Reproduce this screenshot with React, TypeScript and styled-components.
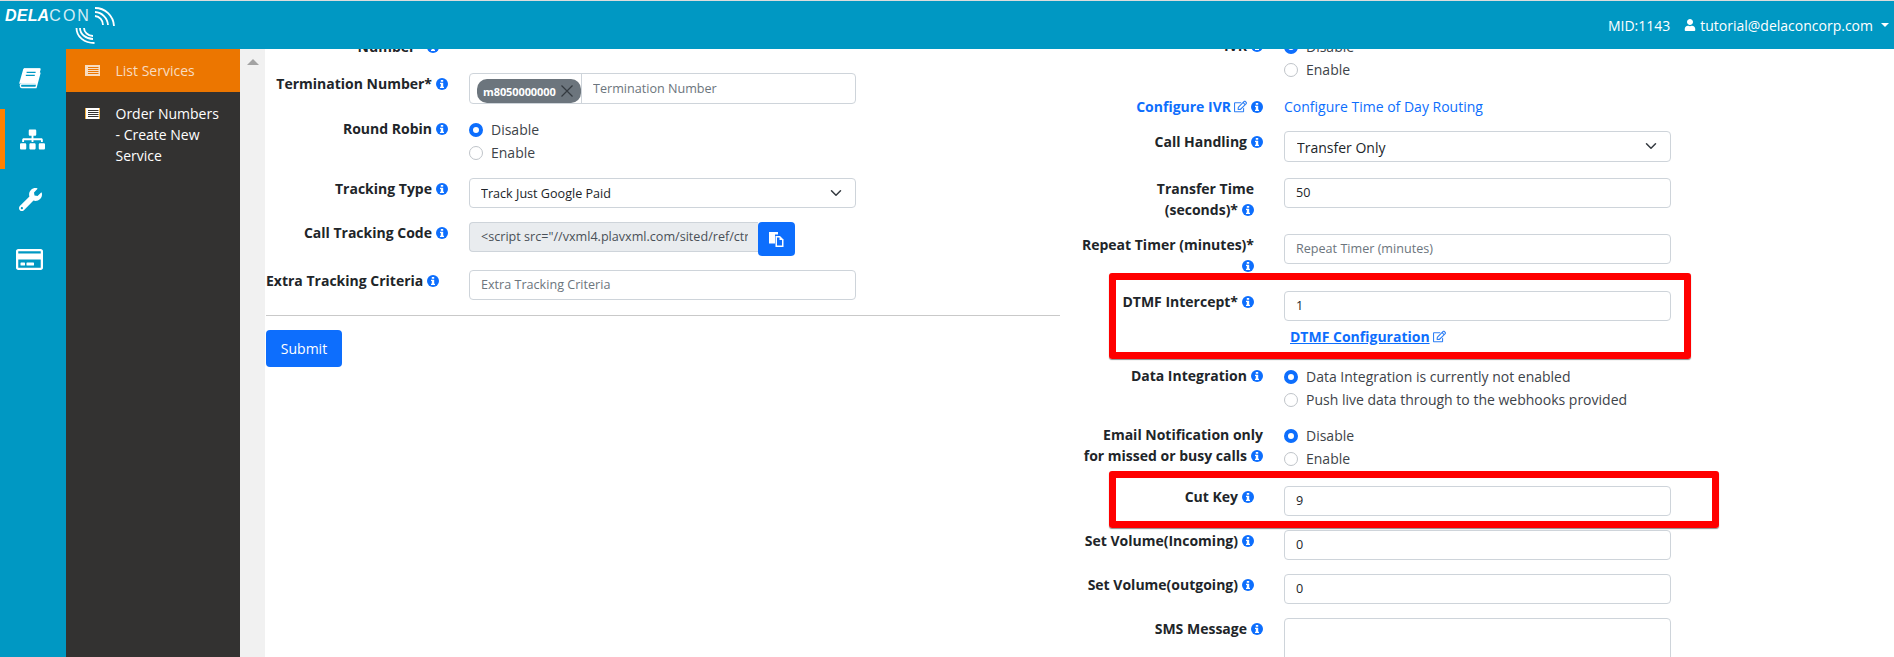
import React from "react";
import styled, { createGlobalStyle } from "styled-components";
import { FaRegCreditCard, FaRegEdit, FaSitemap, FaUser, FaWrench } from "react-icons/fa";

const Global = createGlobalStyle`
  html, body { margin: 0; height: 100%; overflow: hidden; background: #fff; }
  body { font-family: "Open Sans", "Liberation Sans", sans-serif; font-size: 14px; line-height: 21px; color: #212529; }
  * { box-sizing: border-box; }
`;

const Page = styled.div`
  display: flex; flex-direction: column; height: 657px; overflow: hidden;
`;
const Header = styled.header`
  position: relative; flex: none; height: 49px; display: flex; align-items: center; justify-content: flex-end;
  background: #0098c3; border-top: 1px solid #dcdcdc; color: #fff; padding-right: 5px;
`;
const Logo = styled.div`
  position: absolute; left: 5px; top: 7px; font-family: "Liberation Sans", Arial, sans-serif; font-size: 16px; line-height: 16px; color: #fff;
`;
const LogoStrong = styled.b`
  font-style: italic; letter-spacing: 0.2px;
`;
const LogoLight = styled.span`
  color: #d3eef6; letter-spacing: 2px;
`;
const Waves = styled.svg`
  position: absolute; left: 0; top: 0; pointer-events: none;
`;
const Mid = styled.span`
  margin-right: 14px;
`;
const UserText = styled.span`
  display: inline-flex; align-items: center; gap: 4px;
`;
const Caret = styled.span`
  width: 0; height: 0; margin-left: 8px; border-left: 4px solid transparent; border-right: 4px solid transparent; border-top: 4px solid #fff;
`;
const Body = styled.div`
  flex: 1; min-height: 0; display: flex;
`;
const Rail = styled.nav`
  flex: none; width: 66px; background: #0098c3; display: flex; flex-direction: column;
`;
const RailItem = styled.div<{ $active?: boolean; $shift?: number }>`
  height: 60px; display: flex; align-items: center; justify-content: center; color: #fff;
  border-left: 5px solid ${(p) => (p.$active ? "#ff8000" : "transparent")};
  padding-right: ${(p) => p.$shift ?? 8}px;
`;
const Menu = styled.aside`
  flex: none; width: 174px; background: #333231;
`;
const MenuItem = styled.div<{ $active?: boolean }>`
  display: flex; gap: 15.5px; padding: ${(p) => (p.$active ? "11px 16px 11px 19px" : "11px 16px 0 19px")};
  background: ${(p) => (p.$active ? "#ec7600" : "transparent")}; color: ${(p) => (p.$active ? "#f8dcc0" : "#fff")};
  font-size: 14px;
`;
const MenuIcon = styled.svg`
  flex: none; margin-top: 5px;
`;
const ScrollTrack = styled.div`
  flex: none; width: 25px; background: #f1f1f1; display: flex; justify-content: center; padding-top: 10px;
`;
const ScrollArrow = styled.span`
  width: 0; height: 0; border-left: 6px solid transparent; border-right: 6px solid transparent; border-bottom: 6px solid #a3a3a3;
`;
const Main = styled.main`
  flex: 1; min-width: 0; overflow: hidden; padding-left: 1px;
`;
const Columns = styled.div`
  display: grid; grid-template-columns: 794px 590px; column-gap: 21px; margin-top: -13px;
`;
const Column = styled.section``;
const RightColumn = styled.section`
  margin-top: -1px;
`;
const Row = styled.div<{ $mb?: number }>`
  position: relative; display: flex; gap: 21px; margin-bottom: ${(p) => p.$mb ?? 14}px;
`;
const Label = styled.label<{ $inset?: boolean; $link?: boolean }>`
  flex: none; width: 182px; text-align: right; font-weight: 700; line-height: 21px;
  padding-right: ${(p) => (p.$inset ? "9px" : "0")}; white-space: ${(p) => (p.$link ? "nowrap" : "normal")};
  color: ${(p) => (p.$link ? "#0d6efd" : "#212529")};
`;
const NoWrap = styled.span`
  white-space: nowrap;
`;
const InfoSvg = styled.svg`
  vertical-align: -1px; margin-left: 4px;
`;
const EditIcon = styled(FaRegEdit)`
  font-size: 13px; vertical-align: -1px; margin-left: 3px; color: #2f80f5;
`;
const Control = styled.div`
  flex: none; width: 387px;
`;
const TextInput = styled.input`
  display: block; width: 100%; height: 30px; padding: 0 11px 2px; border: 1px solid #ced4da; border-radius: 4px;
  font: 12.6px "Open Sans", sans-serif; color: #212529; background: #fff; outline: none;
  &::placeholder { color: #6c757d; }
`;
const Select = styled.select<{ $large?: boolean }>`
  display: block; width: 100%; height: ${(p) => (p.$large ? "31px" : "30px")}; padding: ${(p) => (p.$large ? "1px 12px 0" : "0 11px")}; border: 1px solid #ced4da; border-radius: 4px; appearance: none;
  font: ${(p) => (p.$large ? "14px" : "12.6px")} "Open Sans", sans-serif; color: #212529; background: #fff; outline: none;
`;
const SelectWrap = styled.div`
  position: relative;
`;
const Chevron = styled.svg`
  position: absolute; right: 14px; top: 9px; pointer-events: none;
`;
const TagBox = styled.div`
  display: flex; height: 31px; border: 1px solid #ced4da; border-radius: 4px; padding-left: 7px;
`;
const Chip = styled.span`
  flex: none; width: 104px; height: 24px; margin-top: 5px; display: flex; align-items: center; gap: 4px; padding-left: 6px;
  background: #6c757d; border-radius: 10px; color: #fff; font-size: 11px; font-weight: 700; letter-spacing: -0.1px;
`;
const ChipClose = styled.svg`
  flex: none; margin-left: 1px;
`;
const TagInput = styled.input`
  flex: 1; min-width: 0; border: 0; border-left: 1px solid #ced4da; padding: 0 0 1px 11px; outline: none; background: transparent;
  font: 12.6px "Open Sans", sans-serif;
  &::placeholder { color: #6c757d; }
`;
const RadioGroup = styled.div`
  display: flex; flex-direction: column;
`;
const RadioLine = styled.label`
  display: flex; align-items: center; gap: 8px; height: 23px; color: #3d4349;
`;
const Radio = styled.input`
  appearance: none; flex: none; width: 14px; height: 14px; margin: 0; border-radius: 50%; border: 1px solid #bfc4c9; background: #fff;
  &:checked { border: 4px solid #0d6efd; }
`;
const CopyGroup = styled.div`
  display: flex; align-items: flex-start; height: 34px;
`;
const CodeInput = styled(TextInput)`
  flex: none; width: 289px; background: #e9ecef; border-right: 0; border-radius: 4px 0 0 4px; padding-right: 10px; color: #495057;
`;
const CopyButton = styled.button`
  flex: none; width: 37px; height: 34px; border: 0; border-radius: 4px; background: #0d6efd; padding: 0; display: flex; align-items: center; justify-content: center;
`;
const Divider = styled.hr`
  margin: 0 0 14px; border: 0; border-top: 1px solid #c9c9c9;
`;
const Submit = styled.button`
  display: block; width: 76px; height: 37px; border: 0; border-radius: 4px; background: #0d6efd; color: #fff; font: 14px "Open Sans", sans-serif;
`;
const PlainLink = styled.a`
  color: #0d6efd; display: block;
`;
const DtmfLink = styled.a`
  display: block; margin: 5px 0 0 6px; font-weight: 700; color: #0d6efd; text-decoration: underline; line-height: 21px;
`;
const SmsArea = styled.textarea`
  display: block; width: 100%; height: 90px; border: 1px solid #ced4da; border-radius: 4px; outline: none; resize: none;
`;
const Highlight = styled.div<{ $top: number; $width: number; $height: number }>`
  position: absolute; left: 28px; top: ${(p) => p.$top}px; width: ${(p) => p.$width}px; height: ${(p) => p.$height}px;
  border: 7px solid #ff0000; border-radius: 3px; box-shadow: 0 1px 1px rgba(0,0,0,.45); pointer-events: none;
`;

const Info = () => (
  <InfoSvg width="12" height="12" viewBox="0 0 12 12">
    <circle cx="6" cy="6" r="6" fill="#0d6efd" />
    <path fill="#fff" d="M4.800 1.900h2.400v1.800H4.800zM4 4.700h3.200v4h.8V10H4V8.700h.8V6H4z" />
  </InfoSvg>
);

const SelectChevron = () => (
  <Chevron width="12" height="12" viewBox="0 0 16 16" fill="none" stroke="#343a40" strokeWidth="2" strokeLinecap="round" strokeLinejoin="round">
    <path d="M2 5l6 6 6-6" />
  </Chevron>
);

const ListIcon = ({ active }: { active?: boolean }) => (
  <MenuIcon width="15" height="11" viewBox="0 0 15 11">
    <rect width="15" height="11" fill={active ? "#f8dcc0" : "#fff"} />
    {[2, 4, 6, 8].map((y) => (
      <rect key={y} x="3" y={y} width="10.500" height="1" fill={active ? "#ec7600" : "#333231"} />
    ))}
    {!active && <rect x="0" y="0" width="1" height="11" fill="#f0b040" />}
    {!active && <rect x="14" y="0" width="1" height="11" fill="#f0b040" />}
  </MenuIcon>
);

const BookIcon = () => (
  <svg width="24" height="22" viewBox="0 0 24 22" fill="none">
    <path d="M6 1h16l-4 15H3.500C2 16 2 19.500 3.600 19.500H18l4-15" stroke="#fff" strokeWidth="1.400" strokeLinejoin="round" />
    <path d="M6 .6h16L18 15.600H2.400C1.600 15.600 1 16 1 16L5 2C5.200 1.200 5.500.6 6 .6z" fill="#fff" />
    <path d="M8.600 4.400h9M7.800 7.400h9" stroke="#0098c3" strokeWidth="1.200" />
  </svg>
);

const CopyIcon = () => (
  <svg width="15" height="15" viewBox="0 0 15 15">
    <path d="M0 0h9v2.500H6v9H0z" fill="#fff" />
    <path d="M6.500 4h4.500l3.500 3.500V15H6.500z" fill="#fff" />
    <path d="M8 5.500h2.500V8H13v5.500H8z" fill="#0d6efd" />
  </svg>
);

export default function App() {
  return (
    <Page>
      <Global />
      <Header>
        <Logo>
          <LogoStrong>DELA</LogoStrong>
          <LogoLight>CON</LogoLight>
        </Logo>
        <Waves width="120" height="48" viewBox="0 0 120 48" fill="none" stroke="#fff" strokeWidth="1.800">
          <path d="M95 15a9 9 0 0 1 8 9M95 11a14 14 0 0 1 13 13M95 7a19 19 0 0 1 19 18" />
          <path d="M80 27c0 6 6 11 13 11M84 27c0 4 4 8 9 8M76.500 27c0 9 8 15 18 15" />
        </Waves>
        <Mid>MID:1143</Mid>
        <UserText><FaUser size={12} />tutorial@delaconcorp.com</UserText>
        <Caret />
      </Header>
      <Body>
        <Rail>
          <RailItem $shift={12}><BookIcon /></RailItem>
          <RailItem $active $shift={6}><FaSitemap size={25} /></RailItem>
          <RailItem $shift={11}><FaWrench size={23} /></RailItem>
          <RailItem $shift={12}><FaRegCreditCard size={27} /></RailItem>
        </Rail>
        <Menu>
          <MenuItem $active><ListIcon active /><span>List Services</span></MenuItem>
          <MenuItem><ListIcon /><span>Order Numbers - Create New Service</span></MenuItem>
        </Menu>
        <ScrollTrack><ScrollArrow /></ScrollTrack>
        <Main>
          <Columns>
            <Column>
              <Row $mb={16}>
                <Label $inset>Number*<Info /></Label>
              </Row>
              <Row>
                <Label>Termination Number*<Info /></Label>
                <Control>
                  <TagBox>
                    <Chip>
                      m8050000000
                      <ChipClose width="12" height="12" viewBox="0 0 12 12" stroke="#343a40" strokeWidth="1.200">
                        <path d="M.5.500l11 11M11.500.500l-11 11" />
                      </ChipClose>
                    </Chip>
                    <TagInput placeholder="Termination Number" />
                  </TagBox>
                </Control>
              </Row>
              <Row>
                <Label>Round Robin<Info /></Label>
                <Control>
                  <RadioGroup>
                    <RadioLine><Radio type="radio" name="rr" defaultChecked />Disable</RadioLine>
                    <RadioLine><Radio type="radio" name="rr" />Enable</RadioLine>
                  </RadioGroup>
                </Control>
              </Row>
              <Row>
                <Label>Tracking Type<Info /></Label>
                <Control>
                  <SelectWrap>
                    <Select defaultValue="Track Just Google Paid"><option>Track Just Google Paid</option></Select>
                    <SelectChevron />
                  </SelectWrap>
                </Control>
              </Row>
              <Row>
                <Label>Call Tracking Code<Info /></Label>
                <Control>
                  <CopyGroup>
                    <CodeInput readOnly value={'<script src="//vxml4.plavxml.com/sited/ref/ctrack.js?id=1143"></script>'} />
                    <CopyButton aria-label="Copy"><CopyIcon /></CopyButton>
                  </CopyGroup>
                </Control>
              </Row>
              <Row $mb={15}>
                <Label $inset><NoWrap>Extra Tracking Criteria<Info /></NoWrap></Label>
                <Control><TextInput placeholder="Extra Tracking Criteria" /></Control>
              </Row>
              <Divider />
              <Submit>Submit</Submit>
            </Column>
            <RightColumn>
              <Row $mb={15}>
                <Label>IVR<Info /></Label>
                <Control>
                  <RadioGroup>
                    <RadioLine><Radio type="radio" name="ivr" defaultChecked />Disable</RadioLine>
                    <RadioLine><Radio type="radio" name="ivr" />Enable</RadioLine>
                  </RadioGroup>
                </Control>
              </Row>
              <Row>
                <Label $link>Configure IVR<EditIcon /><Info /></Label>
                <Control><PlainLink>Configure Time of Day Routing</PlainLink></Control>
              </Row>
              <Row $mb={16}>
                <Label>Call Handling<Info /></Label>
                <Control>
                  <SelectWrap>
                    <Select $large defaultValue="Transfer Only"><option>Transfer Only</option></Select>
                    <SelectChevron />
                  </SelectWrap>
                </Control>
              </Row>
              <Row>
                <Label $inset>Transfer Time<br />(seconds)*<Info /></Label>
                <Control><TextInput defaultValue="50" /></Control>
              </Row>
              <Row $mb={15}>
                <Label $inset>Repeat Timer (minutes)*<br /><Info /></Label>
                <Control><TextInput placeholder="Repeat Timer (minutes)" /></Control>
              </Row>
              <Row $mb={18}>
                <Label $inset>DTMF Intercept*<Info /></Label>
                <Control>
                  <TextInput defaultValue="1" />
                  <DtmfLink>DTMF Configuration<EditIcon /></DtmfLink>
                </Control>
                <Highlight $top={-18} $width={582} $height={86} />
              </Row>
              <Row $mb={13}>
                <Label>Data Integration<Info /></Label>
                <Control>
                  <RadioGroup>
                    <RadioLine><Radio type="radio" name="di" defaultChecked />Data Integration is currently not enabled</RadioLine>
                    <RadioLine><Radio type="radio" name="di" />Push live data through to the webhooks provided</RadioLine>
                  </RadioGroup>
                </Control>
              </Row>
              <Row $mb={16}>
                <Label>Email Notification only<br />for missed or busy calls<Info /></Label>
                <Control>
                  <RadioGroup>
                    <RadioLine><Radio type="radio" name="en" defaultChecked />Disable</RadioLine>
                    <RadioLine><Radio type="radio" name="en" />Enable</RadioLine>
                  </RadioGroup>
                </Control>
              </Row>
              <Row>
                <Label $inset>Cut Key<Info /></Label>
                <Control><TextInput defaultValue="9" /></Control>
                <Highlight $top={-15} $width={610} $height={57} />
              </Row>
              <Row>
                <Label $inset>Set Volume(Incoming)<Info /></Label>
                <Control><TextInput defaultValue="0" /></Control>
              </Row>
              <Row>
                <Label $inset>Set Volume(outgoing)<Info /></Label>
                <Control><TextInput defaultValue="0" /></Control>
              </Row>
              <Row>
                <Label>SMS Message<Info /></Label>
                <Control><SmsArea /></Control>
              </Row>
            </RightColumn>
          </Columns>
        </Main>
      </Body>
    </Page>
  );
}
